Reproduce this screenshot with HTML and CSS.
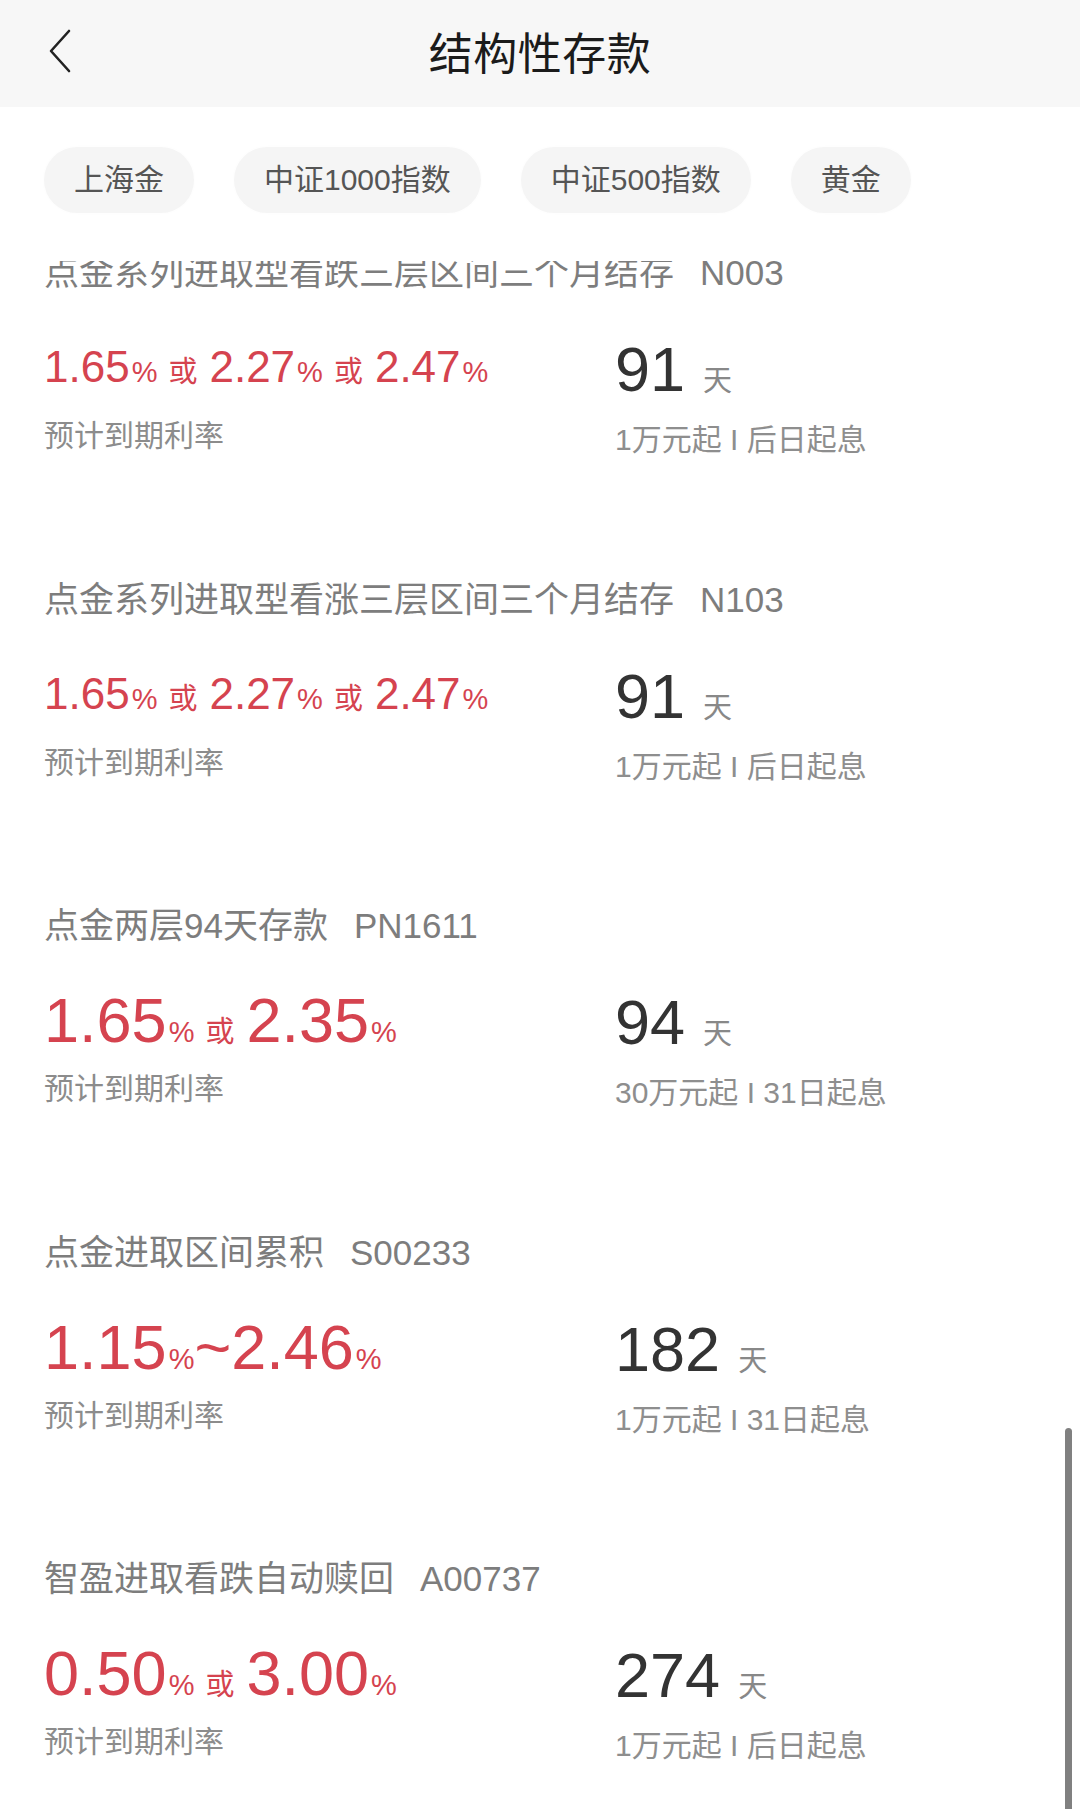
FILE: index.html
```html
<!DOCTYPE html>
<html lang="zh-CN">
<head>
<meta charset="utf-8">
<title>结构性存款</title>
<link rel="stylesheet" href="styles.css">
</head>
<body>
<div class="page">
  <header class="topbar">
    <div class="back">
      <svg width="24" height="44" viewBox="0 0 24 44"><polyline points="21,2 3,22 21,42" fill="none" stroke="#222" stroke-width="2.6" stroke-linecap="round" stroke-linejoin="round"/></svg>
    </div>
    <h1 class="title">结构性存款</h1>
    <div class="spacer"></div>
  </header>

  <nav class="chips">
    <span class="chip">上海金</span>
    <span class="chip">中证1000指数</span>
    <span class="chip">中证500指数</span>
    <span class="chip">黄金</span>
  </nav>

  <main class="list">
    <section class="item first">
      <div class="item-title">点金系列进取型看跌三层区间三个月结存<span class="code">N003</span></div>
      <div class="item-body">
        <div class="col-left">
          <div class="rate sm"><span class="num">1.65</span><span class="pct">%</span><span class="or">或</span><span class="num">2.27</span><span class="pct">%</span><span class="or">或</span><span class="num">2.47</span><span class="pct">%</span></div>
          <div class="label">预计到期利率</div>
        </div>
        <div class="col-right">
          <div class="days"><span class="dnum">91</span><span class="dunit">天</span></div>
          <div class="sub">1万元起 I 后日起息</div>
        </div>
      </div>
    </section>

    <section class="item">
      <div class="item-title">点金系列进取型看涨三层区间三个月结存<span class="code">N103</span></div>
      <div class="item-body">
        <div class="col-left">
          <div class="rate sm"><span class="num">1.65</span><span class="pct">%</span><span class="or">或</span><span class="num">2.27</span><span class="pct">%</span><span class="or">或</span><span class="num">2.47</span><span class="pct">%</span></div>
          <div class="label">预计到期利率</div>
        </div>
        <div class="col-right">
          <div class="days"><span class="dnum">91</span><span class="dunit">天</span></div>
          <div class="sub">1万元起 I 后日起息</div>
        </div>
      </div>
    </section>

    <section class="item">
      <div class="item-title">点金两层94天存款<span class="code">PN1611</span></div>
      <div class="item-body">
        <div class="col-left">
          <div class="rate"><span class="num">1.65</span><span class="pct">%</span><span class="or">或</span><span class="num">2.35</span><span class="pct">%</span></div>
          <div class="label">预计到期利率</div>
        </div>
        <div class="col-right">
          <div class="days"><span class="dnum">94</span><span class="dunit">天</span></div>
          <div class="sub">30万元起 I 31日起息</div>
        </div>
      </div>
    </section>

    <section class="item">
      <div class="item-title">点金进取区间累积<span class="code">S00233</span></div>
      <div class="item-body">
        <div class="col-left">
          <div class="rate"><span class="num">1.15</span><span class="pct">%</span><span class="num">~2.46</span><span class="pct">%</span></div>
          <div class="label">预计到期利率</div>
        </div>
        <div class="col-right">
          <div class="days"><span class="dnum">182</span><span class="dunit">天</span></div>
          <div class="sub">1万元起 I 31日起息</div>
        </div>
      </div>
    </section>

    <section class="item">
      <div class="item-title">智盈进取看跌自动赎回<span class="code">A00737</span></div>
      <div class="item-body">
        <div class="col-left">
          <div class="rate"><span class="num">0.50</span><span class="pct">%</span><span class="or">或</span><span class="num">3.00</span><span class="pct">%</span></div>
          <div class="label">预计到期利率</div>
        </div>
        <div class="col-right">
          <div class="days"><span class="dnum">274</span><span class="dunit">天</span></div>
          <div class="sub">1万元起 I 后日起息</div>
        </div>
      </div>
    </section>

    <div class="scrollbar"></div>
  </main>
</div>
</body>
</html>
```

FILE: styles.css
```css
* { box-sizing: border-box; }

html, body {
  margin: 0;
  padding: 0;
  background: #ffffff;
}

body {
  width: 1080px;
  height: 1809px;
  overflow: hidden;
  font-family: "Liberation Sans", "Noto Sans CJK SC", sans-serif;
}

.page {
  width: 1080px;
  height: 1809px;
  display: flex;
  flex-direction: column;
  overflow: hidden;
}

/* ---------- top bar ---------- */
.topbar {
  height: 107px;
  flex: 0 0 107px;
  padding-bottom: 6px;
  background: #f7f7f7;
  display: grid;
  grid-template-columns: 1fr auto 1fr;
  align-items: center;
}

.back {
  padding-left: 48px;
  display: flex;
  align-items: center;
}

.back svg { display: block; }

.title {
  margin: 0;
  font-family: "Noto Sans CJK SC", sans-serif;
  font-size: 44px;
  font-weight: 400;
  line-height: 60px;
  color: #1b1b1b;
  letter-spacing: 0.5px;
}

/* ---------- chips ---------- */
.chips {
  flex: 0 0 154px;
  height: 154px;
  padding: 40px 0 0 44px;
  display: flex;
  gap: 40px;
  align-items: flex-start;
  background: #ffffff;
}

.chip {
  height: 66px;
  padding: 0 30px;
  border-radius: 33px;
  background: #f5f5f5;
  box-shadow: 0 0 4px rgba(0, 0, 0, 0.015);
  color: #555555;
  font-size: 30px;
  line-height: 66px;
  white-space: nowrap;
}

/* ---------- list ---------- */
.list {
  position: relative;
  flex: 1 1 auto;
  overflow: hidden;
  padding-left: 44px;
}

.item {
  padding-bottom: 114.5px;
}

.item.first {
  margin-top: -13px;
}

.item-title {
  height: 50px;
  line-height: 50px;
  font-size: 35px;
  color: #7d7d7d;
  white-space: nowrap;
}

.code {
  margin-left: 26px;
  font-size: 35px;
}

.item-body {
  display: grid;
  grid-template-columns: 571px auto;
  margin-top: 39px;
}

.col-left,
.col-right {
  display: flex;
  flex-direction: column;
}

.rate {
  height: 60px;
  display: flex;
  align-items: baseline;
  color: #d5434f;
  white-space: nowrap;
}

.rate .num {
  font-size: 63px;
  line-height: 60px;
}

.rate.sm .num {
  font-size: 44px;
}

.rate .pct {
  font-size: 29px;
  line-height: 29px;
  margin-left: 2px;
}

.rate .or {
  font-family: "Noto Sans CJK SC", sans-serif;
  font-size: 29px;
  line-height: 29px;
  margin: 0 12px 0 11px;
}

.label {
  margin-top: 19px;
  height: 40px;
  line-height: 40px;
  font-size: 30px;
  color: #8c8c8c;
}

.col-right {
  padding-top: 2px;
}

.days {
  height: 60px;
  display: flex;
  align-items: baseline;
  white-space: nowrap;
}

.dnum {
  font-size: 63px;
  line-height: 60px;
  color: #333333;
}

.dunit {
  font-family: "Noto Sans CJK SC", sans-serif;
  font-size: 29px;
  line-height: 29px;
  color: #888888;
  margin-left: 18px;
}

.sub {
  margin-top: 21px;
  height: 40px;
  line-height: 40px;
  font-size: 30px;
  color: #8e8e8e;
  white-space: nowrap;
}

.scrollbar {
  position: absolute;
  left: 1065px;
  top: 1167px;
  width: 7px;
  height: 420px;
  border-radius: 4px;
  background: #808080;
}
```
